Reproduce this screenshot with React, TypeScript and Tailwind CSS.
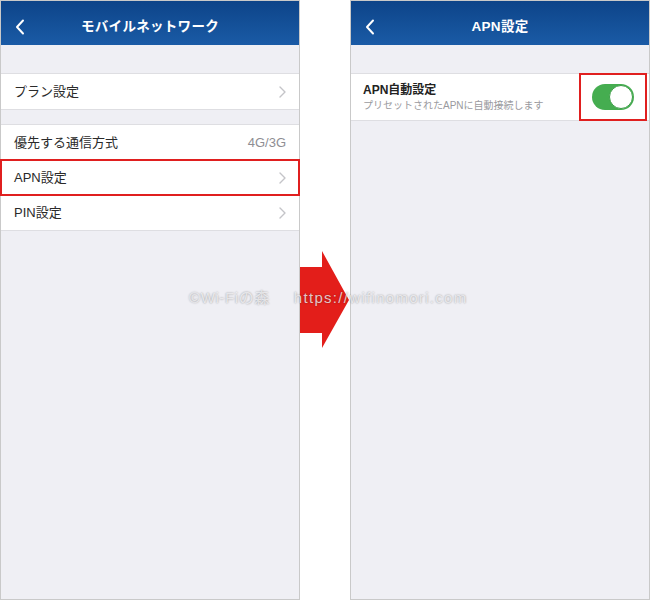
import React from 'react';

const font = "font-['Liberation_Sans','Noto_Sans_CJK_JP',sans-serif]";

function BackIcon() {
  return (
    <svg width="10" height="16" viewBox="0 0 10 16" className="ml-[14px]">
      <path d="M8 1.5 L2 8 L8 14.5" fill="none" stroke="white" strokeWidth="2" strokeLinecap="round" strokeLinejoin="round" />
    </svg>
  );
}

function Chevron() {
  return (
    <svg width="7" height="12" viewBox="0 0 7 12">
      <path d="M1 1 L6 6 L1 11" fill="none" stroke="#c4c4c8" strokeWidth="1.4" strokeLinecap="round" strokeLinejoin="round" />
    </svg>
  );
}

function Header({ title }: { title: string }) {
  return (
    <div className="relative flex h-[44px] items-center bg-gradient-to-b from-[#0d4489] to-[#1a5ba6] pt-[7px]">
      <BackIcon />
      <div className="absolute inset-0 flex items-center justify-center pt-[8px] text-[13.5px] font-bold tracking-[0.3px] text-white">
        {title}
      </div>
    </div>
  );
}

function Row({ label, value, chevron = true, highlight = false }: { label: string; value?: string; chevron?: boolean; highlight?: boolean }) {
  return (
    <div
      className={
        'flex h-[35px] items-center justify-between bg-white pl-[13px] pr-[13px] ' +
        (highlight ? 'outline outline-2 -outline-offset-1 outline-[#e01f1f] relative z-10' : '')
      }
    >
      <span className="text-[13px] leading-none text-[#2a2a2a]">{label}</span>
      {value && <span className="text-[13px] leading-none text-[#8e8e93]">{value}</span>}
      {chevron && !value && <Chevron />}
    </div>
  );
}

export default function App() {
  return (
    <div className={`relative flex h-[600px] w-[650px] bg-white ${font}`}>
      {/* left screen */}
      <div className="flex h-[600px] w-[300px] flex-col border border-[#c9c9c9] bg-[#efeff4]">
        <Header title="モバイルネットワーク" />
        <div className="mt-[28px] border-y border-[#dedee2]">
          <Row label="プラン設定" />
        </div>
        <div className="mt-[14px] border-y border-[#dedee2]">
          <Row label="優先する通信方式" value="4G/3G" />
          <Row label="APN設定" highlight />
          <Row label="PIN設定" />
        </div>
      </div>

      {/* arrow */}
      <div className="flex w-[50px] items-center">
        <svg width="50" height="100" viewBox="0 0 50 100">
          <polygon points="0,17 22,17 22,1 49,50 22,98 22,83 0,83" fill="#e31e1a" />
        </svg>
      </div>

      {/* right screen */}
      <div className="flex h-[600px] w-[300px] flex-col border border-[#c9c9c9] bg-[#efeff4]">
        <Header title="APN設定" />
        <div className="mt-[28px] flex h-[48px] items-center justify-between border-y border-[#dedee2] bg-white pl-[12px]">
          <div className="flex flex-col gap-[5px]">
            <span className="text-[12px] font-bold leading-none text-[#222]">APN自動設定</span>
            <span className="text-[10px] leading-none text-[#9a9a9e]">プリセットされたAPNに自動接続します</span>
          </div>
          <div className="mr-[2px] flex h-[48px] w-[68px] items-center justify-center border-2 border-[#e01f1f]">
            <div className="flex h-[26px] w-[42px] items-center justify-end rounded-full bg-[#45ad50] pr-[1px]">
              <div className="h-[24px] w-[24px] rounded-full border border-[#3c9e47] bg-white" />
            </div>
          </div>
        </div>
      </div>

      {/* watermark */}
      <div className="pointer-events-none absolute left-[189px] top-[288px] flex gap-[24px] whitespace-pre text-[15px] leading-[20px] text-[#f4f4f6]/80 [text-shadow:0_0_2px_rgba(0,0,0,0.4)]">
        <span className="tracking-[0.6px]">©Wi-Fiの森</span>
        <span className="tracking-[1.3px]">https://wifinomori.com</span>
      </div>
    </div>
  );
}
